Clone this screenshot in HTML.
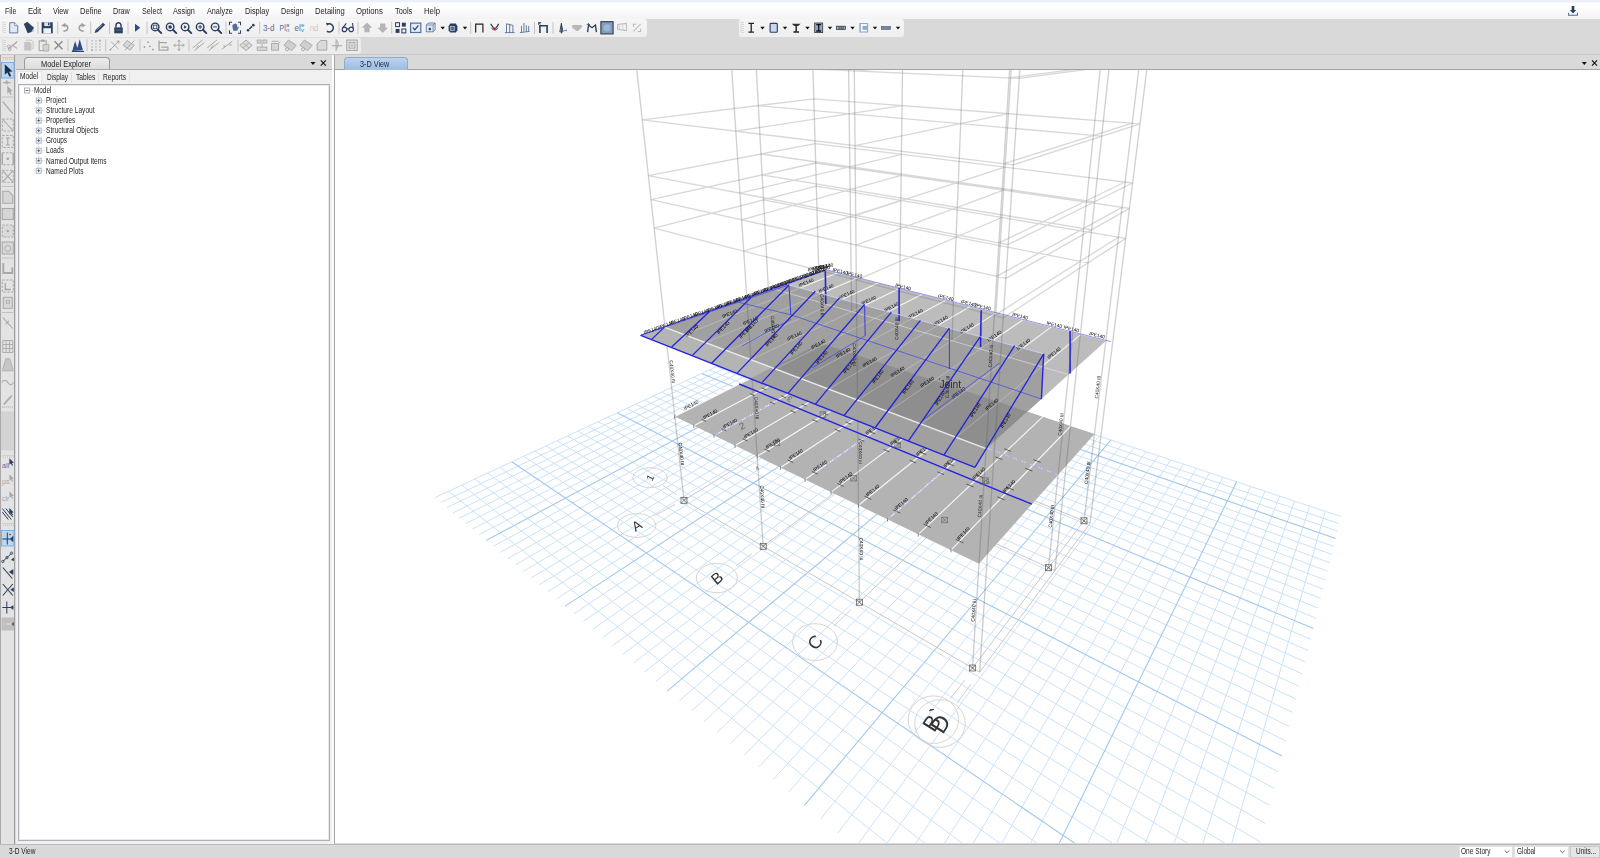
<!DOCTYPE html>
<html><head><meta charset="utf-8"><title>ETABS - 3-D View</title>
<style>
html,body{margin:0;padding:0;}
body{width:1600px;height:858px;overflow:hidden;background:#d9d9d9;font-family:"Liberation Sans",sans-serif;font-size:8px;color:#222;position:relative;}
.abs{position:absolute;}
.t{position:absolute;white-space:nowrap;transform-origin:0 50%;display:inline-block;}
#menubar{left:0;top:0;width:1600px;height:19px;background:linear-gradient(#edf0fa 0,#edf0fa 2px,#ffffff 3px,#fdfdfd 9px,#f3f3f3 19px);}
#tb1{left:0;top:19px;width:647px;height:18px;background:linear-gradient(#f6f6f6,#efefef);border-radius:0 3px 3px 0;}
#tb1b{left:739px;top:19px;width:165px;height:18px;background:linear-gradient(#f6f6f6,#efefef);border-radius:2px 3px 3px 2px;}
#tb2{left:0;top:37px;width:361px;height:17px;background:#ececec;border-radius:0 3px 3px 0;border-top:1px solid #e0e0e0;box-sizing:border-box;}
#dockline{left:0;top:54px;width:1600px;height:1px;background:#c6c6c6;}
#lefttb{left:0;top:55px;width:15px;height:789px;background:#e3e3e3;border-right:1px solid #9c9c9c;border-left:1px solid #a8a8a8;box-sizing:border-box;}
#band{left:16px;top:55px;width:1584px;height:15px;background:#d9d9d9;}
#bandline{left:16px;top:69px;width:316px;height:1px;background:#a9a9a9;}
#bandline2{left:335px;top:69px;width:1265px;height:1px;background:#a3a3a3;}
#metab{left:24px;top:57px;width:86px;height:13px;background:linear-gradient(#ececec,#dbdbdb);border:1px solid #9b9b9b;border-bottom:none;border-radius:4px 4px 0 0;box-sizing:border-box;}
#vtab{left:343.5px;top:57px;width:64px;height:13px;background:linear-gradient(#bdd4ee,#a9c6e6 55%,#9dbde2);border:1px solid #92abc9;border-bottom:none;border-radius:4px 4px 0 0;box-sizing:border-box;}
#panel{left:16px;top:70px;width:316px;height:774px;background:#f0f0f0;}
#subtab{left:17px;top:71px;width:25px;height:13px;background:#f7f7f7;border:1px solid #e4e4e4;border-bottom:none;box-sizing:border-box;}
.st{top:72px;height:11px;border-right:1px solid #e2e2e2;}
#tree{left:18px;top:84px;width:312px;height:757px;background:#fff;border:1px solid #aeaeb6;box-sizing:border-box;box-shadow:inset 0 0 0 1px #e9e9ee;}
#split{left:332px;top:55px;width:2px;height:789px;background:#fbfbfb;}
#splitline{left:334px;top:55px;width:1px;height:789px;background:#a5a5a5;}
#view{left:335px;top:70px;width:1265px;height:773px;background:#fff;overflow:hidden;}
#viewr{left:1597px;top:70px;width:3px;height:774px;background:#ececec;}
#status{left:0;top:844px;width:1600px;height:14px;background:#d9d9d9;border-top:1px solid #b9b9b9;box-sizing:border-box;}
.dd{top:845.5px;height:12.5px;background:#fff;border:1px solid #e1e1e1;box-sizing:border-box;}
#ov{left:0;top:0;pointer-events:none;}
</style></head><body>
<div id="menubar" class="abs"></div><div id="tb1" class="abs"></div><div id="tb1b" class="abs"></div><div id="tb2" class="abs"></div><div id="dockline" class="abs"></div>
<div id="band" class="abs"></div><div id="lefttb" class="abs"></div><div id="panel" class="abs"></div>
<div id="metab" class="abs"></div><div id="bandline" class="abs"></div><div id="bandline2" class="abs"></div><div id="vtab" class="abs"></div>
<div id="subtab" class="abs"></div><div class="abs st" style="left:42px;width:29px"></div><div class="abs st" style="left:72px;width:26px"></div><div class="abs st" style="left:99px;width:30px"></div>
<div id="tree" class="abs"></div><div id="split" class="abs"></div><div id="splitline" class="abs"></div>
<div id="view" class="abs"><svg width="1265" height="773" viewBox="335 70 1265 773" style="display:block;filter:blur(0.3px)" font-family="Liberation Sans, sans-serif">
<path d="M434.9 497.6L789.2 332.8M440.8 502.6L795.5 334.9M446.9 507.6L801.9 337M453.1 512.8L808.4 339.2M459.4 518.1L815 341.4M465.9 523.5L821.6 343.6M472.5 529L828.4 345.8M479.3 534.6L835.3 348.1M493.3 546.3L849.3 352.8M500.5 552.3L856.5 355.2M508 558.5L863.8 357.6M515.5 564.8L871.1 360.1M523.3 571.3L878.6 362.6M531.3 577.9L886.3 365.1M539.4 584.7L894 367.7M547.8 591.6L901.8 370.3M556.4 598.8L909.8 372.9M574.2 613.6L926.1 378.4M583.4 621.3L934.4 381.2M592.9 629.2L942.9 384M602.7 637.4L951.5 386.8M612.7 645.7L960.3 389.8M623 654.3L969.2 392.7M633.6 663.1L978.2 395.7M644.5 672.2L987.4 398.8M655.7 681.5L996.7 401.9M679.1 701L1015.9 408.3M691.3 711.2L1025.7 411.6M703.9 721.7L1035.7 414.9M717 732.5L1045.9 418.3M730.4 743.7L1056.2 421.7M744.2 755.3L1066.8 425.2M758.5 767.2L1077.5 428.8M773.3 779.5L1088.4 432.4M788.6 792.2L1099.5 436.1M820.7 819L1122.4 443.8M837.7 833.1L1134.1 447.7M855.2 847.7L1146.1 451.7M873.4 862.9L1158.3 455.7M892.3 878.6L1170.7 459.9M911.9 894.9L1183.4 464.1M932.3 911.9L1196.3 468.4M953.4 929.5L1209.5 472.8M975.5 947.9L1223 477.3M1022.4 986.9L1250.7 486.5M1047.3 1007.7L1265 491.2M1073.4 1029.5L1279.6 496.1M1100.7 1052.2L1294.5 501.1M1129.2 1075.9L1309.7 506.1M1159.1 1100.8L1325.2 511.3M448.6 491.3L1198.7 1093.1M461.9 485.1L1206.6 1061.3M474.8 479L1214 1031.4M487.5 473.1L1220.9 1003.1M499.8 467.4L1227.5 976.4M523.5 456.4L1239.7 927M534.9 451.1L1245.4 904.2M546.1 445.9L1250.7 882.5M557 440.8L1255.8 861.9M567.6 435.9L1260.7 842.2M578 431L1265.3 823.4M588.2 426.3L1269.8 805.4M598.1 421.7L1274 788.3M607.8 417.2L1278.1 771.8M626.5 408.4L1285.7 741M635.6 404.2L1289.3 726.5M644.5 400.1L1292.7 712.5M653.2 396L1296 699.1M661.7 392.1L1299.2 686.3M670 388.2L1302.3 673.9M678.2 384.4L1305.2 661.9M686.2 380.7L1308.1 650.4M694 377.1L1310.8 639.3M709.2 370L1316 618.2M716.6 366.5L1318.5 608.1M723.8 363.2L1320.9 598.5M730.9 359.9L1323.2 589.1M737.9 356.6L1325.4 580M744.7 353.5L1327.6 571.2M751.4 350.3L1329.7 562.7M758 347.3L1331.8 554.4M764.5 344.3L1333.7 546.4M777 338.4L1337.5 531.1M783.2 335.6L1339.3 523.7M789.2 332.8L1341.1 516.6" stroke="#cae2f9" stroke-width="1" fill="none"/>
<path d="M486.2 540.4L842.2 350.5M565.1 606.1L917.9 375.6M667.2 691.1L1006.2 405.1M804.4 805.4L1110.9 439.9M998.5 967L1236.7 481.8M511.8 461.8L1233.8 951M617.3 412.8L1282 756.1M701.7 373.5L1313.4 628.5M770.8 341.3L1335.7 538.6" stroke="#a0c8f1" stroke-width="1.1" fill="none"/>
<path d="M684 500.3L822.9 414.5M763.2 546.3L897.7 445M859.4 602.2L985.4 480.7M972.5 668L1084 520.8M979.6 672.2L1090 523.3M684 500.3L979.6 672.2M776.8 443L1054.9 570.6M822.9 414.5L1090 523.3" stroke="#cbc9c7" stroke-width="1" fill="none"/>
<ellipse cx="650" cy="477.7" rx="17.3" ry="10" fill="none" stroke="#d2d0ce" stroke-width="0.9"/><text transform="translate(650 477.7) rotate(-62)" font-size="10" fill="#333" text-anchor="middle" y="3.6">1</text>
<ellipse cx="636.7" cy="525.5" rx="19.3" ry="12" fill="none" stroke="#d2d0ce" stroke-width="0.9"/><text transform="translate(636.7 525.5) rotate(-32)" font-size="13.5" fill="#333" text-anchor="middle" y="4.9">A</text>
<ellipse cx="716.8" cy="578" rx="20.5" ry="14.7" fill="none" stroke="#d2d0ce" stroke-width="0.9"/><text transform="translate(716.8 578) rotate(-40)" font-size="15.5" fill="#333" text-anchor="middle" y="5.6">B</text>
<ellipse cx="815" cy="642.1" rx="22.4" ry="18.4" fill="none" stroke="#d2d0ce" stroke-width="0.9"/><text transform="translate(815 642.1) rotate(-52)" font-size="18" fill="#333" text-anchor="middle" y="6.5">C</text>
<ellipse cx="933.4" cy="719.7" rx="25.2" ry="23.8" fill="none" stroke="#d2d0ce" stroke-width="0.9"/><text transform="translate(933.4 719.7) rotate(-58)" font-size="22" fill="#333" text-anchor="middle" y="7.9">B`</text>
<ellipse cx="940" cy="723.5" rx="25.2" ry="23.8" fill="none" stroke="#d2d0ce" stroke-width="0.9"/><text transform="translate(940 723.5) rotate(-58)" font-size="23" fill="#333" text-anchor="middle" y="8.3">D</text>
<path d="M663 485.5L677 495M654 516L675 504.5M736 566L752 553.5M834 626L851 609.5M950 699L965 680M957 703L971 684" stroke="#d2d0ce" stroke-width="1" fill="none"/>
<path d="M684 500.3L674.8 416.4M763.2 546.3L757.2 456.3M859.4 602.2L858.5 505.3M972.5 668L979 563.7M979.6 672.2L986.6 567.4M776.8 443L772.6 367.1M853.6 478.2L852.6 397.3M944.6 520L948.1 433.3M1048.5 567.7L1058.1 474.8M1054.9 570.6L1064.9 477.4M822.9 414.5L820.8 342.9M897.7 445L898.7 368.8M985.4 480.7L990.5 399.3M1084 520.8L1094.5 433.9M1090 523.3L1100.9 436" stroke="rgba(90,90,90,0.3)" stroke-width="1.35" fill="none"/>
<g stroke="#555" stroke-width="0.7" fill="none"><rect x="681" y="497.3" width="6" height="6"/><path d="M681 497.3L687 503.3M687 497.3L681 503.3"/></g>
<g stroke="#555" stroke-width="0.7" fill="none"><rect x="760.2" y="543.3" width="6" height="6"/><path d="M760.2 543.3L766.2 549.3M766.2 543.3L760.2 549.3"/></g>
<g stroke="#555" stroke-width="0.7" fill="none"><rect x="856.4" y="599.2" width="6" height="6"/><path d="M856.4 599.2L862.4 605.2M862.4 599.2L856.4 605.2"/></g>
<g stroke="#555" stroke-width="0.7" fill="none"><rect x="969.5" y="665" width="6" height="6"/><path d="M969.5 665L975.5 671M975.5 665L969.5 671"/></g>
<g stroke="#555" stroke-width="0.7" fill="none"><rect x="773.8" y="440" width="6" height="6"/><path d="M773.8 440L779.8 446M779.8 440L773.8 446"/></g>
<g stroke="#555" stroke-width="0.7" fill="none"><rect x="850.6" y="475.2" width="6" height="6"/><path d="M850.6 475.2L856.6 481.2M856.6 475.2L850.6 481.2"/></g>
<g stroke="#555" stroke-width="0.7" fill="none"><rect x="941.6" y="517" width="6" height="6"/><path d="M941.6 517L947.6 523M947.6 517L941.6 523"/></g>
<g stroke="#555" stroke-width="0.7" fill="none"><rect x="1045.5" y="564.7" width="6" height="6"/><path d="M1045.5 564.7L1051.5 570.7M1051.5 564.7L1045.5 570.7"/></g>
<g stroke="#555" stroke-width="0.7" fill="none"><rect x="819.9" y="411.5" width="6" height="6"/><path d="M819.9 411.5L825.9 417.5M825.9 411.5L819.9 417.5"/></g>
<g stroke="#555" stroke-width="0.7" fill="none"><rect x="894.7" y="442" width="6" height="6"/><path d="M894.7 442L900.7 448M900.7 442L894.7 448"/></g>
<g stroke="#555" stroke-width="0.7" fill="none"><rect x="982.4" y="477.7" width="6" height="6"/><path d="M982.4 477.7L988.4 483.7M988.4 477.7L982.4 483.7"/></g>
<g stroke="#555" stroke-width="0.7" fill="none"><rect x="1081" y="517.8" width="6" height="6"/><path d="M1081 517.8L1087 523.8M1087 517.8L1081 523.8"/></g>
<polygon points="674.8,416.4 979,563.7 1094.5,433.9 820.8,342.9" fill="#b3b3b3"/>
<path d="M674.8 416.4L820.8 342.9M693.9 425.7L839.2 349M714 435.4L858.2 355.3M735.1 445.6L878.1 361.9M757.2 456.3L898.7 368.8M780.6 467.6L920.2 375.9M805.1 479.5L942.6 383.4M831.1 492.1L966 391.1M858.5 505.3L990.5 399.3M887.5 519.4L1016 407.8M918.3 534.3L1042.8 416.7M951 550.1L1070.8 426" stroke="#f6f6f6" stroke-width="1.15" fill="none"/>
<path d="M772.6 367.1L1058.1 474.8" stroke="#e3e3e3" stroke-width="0.8" fill="none"/>
<path d="M674.8 415.2L674.8 418.6M693.9 424.5L693.9 427.9M714 434.2L714 437.6M735.1 444.4L735.1 447.8M757.2 455.1L757.2 458.5M780.6 466.4L780.6 469.8M805.1 478.3L805.1 481.7M831.1 490.9L831.1 494.3M858.5 504.1L858.5 507.5M887.5 518.2L887.5 521.6M918.3 533.1L918.3 536.5M951 548.9L951 552.3" stroke="#555" stroke-width="0.7" fill="none"/>
<path d="M701.6 419.3L706.2 421.5M750.2 393.8L754.8 395.7M761.5 387.9L766.1 389.7M784 376.1L788.5 377.8M794.2 370.7L798.8 372.3M721.5 428.7L726.4 431M769.9 402L774.7 404M781.2 395.8L785.9 397.8M803.4 383.5L808.2 385.3M813.6 377.9L818.4 379.6M742.4 438.6L747.5 441M790.5 410.6L795.6 412.7M801.7 404.1L806.7 406.2M823.8 391.3L828.7 393.2M833.9 385.4L838.8 387.2M764.4 449L769.8 451.5M812.1 419.6L817.4 421.8M823.2 412.8L828.4 415M845 399.4L850.2 401.4M855 393.3L860.1 395.2M787.5 459.9L793.1 462.5M834.8 429.1L840.3 431.4M845.7 422L851.2 424.2M867.2 407.9L872.6 410M877.1 401.5L882.4 403.5M811.8 471.4L817.8 474.2M858.5 439L864.3 441.4M869.3 431.5L875 433.8M890.5 416.8L896.1 418.9M900.1 410.1L905.8 412.2M837.5 483.5L843.7 486.4M883.4 449.4L889.5 451.9M894 441.5L900 444M914.8 426.1L920.8 428.4M924.3 419.1L930.2 421.3M864.5 496.2L871.2 499.4M909.7 460.3L916.1 463M920 452.1L926.4 454.6M940.4 435.8L946.6 438.2M949.6 428.5L955.8 430.8M893.2 509.8L900.2 513.1M937.3 471.8L944 474.6M947.4 463.1L954.1 465.9M967.2 446.1L973.7 448.6M976.2 438.4L982.7 440.8M923.5 524.1L930.9 527.6M966.4 484L973.5 486.9M976.2 474.8L983.2 477.7M995.4 456.9L1002.3 459.5M1004.1 448.8L1010.9 451.3M955.7 539.3L963.6 543M997.2 496.8L1004.7 499.9M1006.6 487.1L1014 490.2M1025.1 468.2L1032.3 471M1033.4 459.7L1040.6 462.3" stroke="#333" stroke-width="0.7" fill="none"/>
<path d="M714 435.4L778 399.9M887.5 519.4L945.7 468.8M975 443.4L1058.1 474.8M866.8 436.4L826.2 464.8" stroke="#9a9af0" stroke-width="0.9" fill="none" stroke-dasharray="5 1.5 1 1.5"/>
<line x1="739.2" y1="384" x2="1031.9" y2="504.2" stroke="#2424dc" stroke-width="1.4"/>
<g opacity="0.75"><g stroke="#555" stroke-width="0.7" fill="none"><rect x="774" y="440.2" width="5.6" height="5.6"/><path d="M774 440.2L779.6 445.8M779.6 440.2L774 445.8"/></g></g>
<g opacity="0.75"><g stroke="#555" stroke-width="0.7" fill="none"><rect x="850.8" y="475.4" width="5.6" height="5.6"/><path d="M850.8 475.4L856.4 481M856.4 475.4L850.8 481"/></g></g>
<g opacity="0.75"><g stroke="#555" stroke-width="0.7" fill="none"><rect x="941.8" y="517.2" width="5.6" height="5.6"/><path d="M941.8 517.2L947.4 522.8M947.4 517.2L941.8 522.8"/></g></g>
<g opacity="0.75"><g stroke="#555" stroke-width="0.7" fill="none"><rect x="820.1" y="411.7" width="5.6" height="5.6"/><path d="M820.1 411.7L825.7 417.3M825.7 411.7L820.1 417.3"/></g></g>
<g opacity="0.75"><g stroke="#555" stroke-width="0.7" fill="none"><rect x="894.9" y="442.2" width="5.6" height="5.6"/><path d="M894.9 442.2L900.5 447.8M900.5 442.2L894.9 447.8"/></g></g>
<g opacity="0.75"><g stroke="#555" stroke-width="0.7" fill="none"><rect x="982.6" y="477.9" width="5.6" height="5.6"/><path d="M982.6 477.9L988.2 483.5M988.2 477.9L982.6 483.5"/></g></g>
<text transform="translate(692.3 407.6) rotate(-26.7)" font-size="4.8" fill="#000" text-anchor="middle" y="-1.0">IPE140</text>
<text transform="translate(711.4 416.5) rotate(-27.9)" font-size="4.8" fill="#000" text-anchor="middle" y="-1.0">IPE140</text>
<text transform="translate(731.3 425.8) rotate(-29.1)" font-size="4.8" fill="#000" text-anchor="middle" y="-1.0">IPE140</text>
<text transform="translate(752.2 435.6) rotate(-30.3)" font-size="4.8" fill="#000" text-anchor="middle" y="-1.0">IPE140</text>
<text transform="translate(774.2 445.8) rotate(-31.8)" font-size="4.8" fill="#000" text-anchor="middle" y="-1.0">IPE140</text>
<text transform="translate(797.3 456.6) rotate(-33.3)" font-size="4.8" fill="#000" text-anchor="middle" y="-1.0">IPE140</text>
<text transform="translate(821.6 468) rotate(-35)" font-size="4.8" fill="#000" text-anchor="middle" y="-1.0">IPE140</text>
<text transform="translate(873.9 431.4) rotate(-35)" font-size="4.8" fill="#000" text-anchor="middle" y="-1.0">IPE140</text>
<text transform="translate(847.3 480) rotate(-36.8)" font-size="4.8" fill="#000" text-anchor="middle" y="-1.0">IPE140</text>
<text transform="translate(898.5 441.6) rotate(-36.8)" font-size="4.8" fill="#000" text-anchor="middle" y="-1.0">IPE140</text>
<text transform="translate(874.3 492.6) rotate(-38.8)" font-size="4.8" fill="#000" text-anchor="middle" y="-1.0">IPE140</text>
<text transform="translate(924.5 452.3) rotate(-38.8)" font-size="4.8" fill="#000" text-anchor="middle" y="-1.0">IPE140</text>
<text transform="translate(902.9 506) rotate(-41)" font-size="4.8" fill="#000" text-anchor="middle" y="-1.0">IPE140</text>
<text transform="translate(951.8 463.6) rotate(-41)" font-size="4.8" fill="#000" text-anchor="middle" y="-1.0">IPE140</text>
<text transform="translate(933.2 520.2) rotate(-43.4)" font-size="4.8" fill="#000" text-anchor="middle" y="-1.0">IPE140</text>
<text transform="translate(980.5 475.5) rotate(-43.4)" font-size="4.8" fill="#000" text-anchor="middle" y="-1.0">IPE140</text>
<text transform="translate(965.3 535.2) rotate(-46)" font-size="4.8" fill="#000" text-anchor="middle" y="-1.0">IPE140</text>
<text transform="translate(1010.9 488.1) rotate(-46)" font-size="4.8" fill="#000" text-anchor="middle" y="-1.0">IPE140</text>
<path d="M674.8 416.4L665 327.3M757.2 456.3L750.9 359.8M858.5 505.3L857.5 400.1M979 563.7L986.1 448.7M986.6 567.4L994.3 451.8M772.6 367.1L768.3 287.4M852.6 397.3L851.6 311.6M948.1 433.3L951.9 340.7M1058.1 474.8L1068.5 374.6M1064.9 477.4L1075.8 376.7M820.8 342.9L818.7 268M898.7 368.8L899.7 288.6M990.5 399.3L995.9 313.1M1094.5 433.9L1105.8 341.1M1100.9 436L1112.6 342.8" stroke="rgba(90,90,90,0.28)" stroke-width="1.35" fill="none"/>
<polygon points="665,327.3 986.1,448.7 1105.8,341.1 825.5,269.6" fill="#bcbcbc"/>
<clipPath id="cD"><polygon points="640.7,335.3 974.9,467.3 986.1,448.7 1041.4,399 1043.7,353.8 789,284.9 797,276.3"/></clipPath>
<g clip-path="url(#cD)"><rect x="600" y="250" width="500" height="250" fill="#b4b4b4"/><polygon points="674.8,416.4 979,563.7 1094.5,433.9 820.8,342.9" fill="rgba(0,0,0,0.11)"/><polygon points="665,327.3 986.1,448.7 1105.8,341.1 825.5,269.6" fill="rgba(0,0,0,0.11)"/></g>
<clipPath id="cOut"><path clip-rule="evenodd" d="M335 70h1262v773h-1262zM640.7 335.3 L974.9 467.3 L986.1 448.7 L1041.4 399 L1043.7 353.8 L789 284.9 L797 276.3 z"/></clipPath>
<path d="M665 327.3L818.7 268M684.9 334.8L837.7 272.8M705.7 342.7L857.5 277.9M727.7 351L878.2 283.1M750.9 359.8L899.7 288.6M775.3 369L922.2 294.3M801.1 378.8L945.7 300.3M828.5 389.1L970.2 306.5M857.5 400.1L995.9 313.1M888.3 411.7L1022.8 319.9M921.1 424.1L1051 327.1M956 437.4L1080.7 334.7" stroke="#dcdcdc" stroke-width="0.9" fill="none" opacity="0.45"/>
<g clip-path="url(#cOut)"><path d="M665 327.3L818.7 268M684.9 334.8L837.7 272.8M705.7 342.7L857.5 277.9M727.7 351L878.2 283.1M750.9 359.8L899.7 288.6M775.3 369L922.2 294.3M801.1 378.8L945.7 300.3M828.5 389.1L970.2 306.5M857.5 400.1L995.9 313.1M888.3 411.7L1022.8 319.9M921.1 424.1L1051 327.1M956 437.4L1080.7 334.7" stroke="#f3f3f3" stroke-width="1.1" fill="none"/></g>
<path d="M768.3 287.4L1068.5 374.6" stroke="#e9e9e9" stroke-width="0.8" fill="none" opacity="0.7"/>
<line x1="665" y1="327.3" x2="986.1" y2="448.7" stroke="#eaeaea" stroke-width="1.4"/>
<text transform="translate(807.1 285.2) rotate(-22.1)" font-size="4.8" fill="#000" text-anchor="middle" y="-1.0">IPE140</text>
<text transform="translate(730.7 316.2) rotate(-22.1)" font-size="4.8" fill="#000" text-anchor="middle" y="-1.0">IPE140</text>
<text transform="translate(827.2 290.8) rotate(-23.1)" font-size="4.8" fill="#000" text-anchor="middle" y="-1.0">IPE140</text>
<text transform="translate(751.3 323.3) rotate(-23.1)" font-size="4.8" fill="#000" text-anchor="middle" y="-1.0">IPE140</text>
<text transform="translate(848.1 296.7) rotate(-24.3)" font-size="4.8" fill="#000" text-anchor="middle" y="-1.0">IPE140</text>
<text transform="translate(772.9 330.7) rotate(-24.3)" font-size="4.8" fill="#000" text-anchor="middle" y="-1.0">IPE140</text>
<text transform="translate(869.9 302.8) rotate(-25.6)" font-size="4.8" fill="#000" text-anchor="middle" y="-1.0">IPE140</text>
<text transform="translate(795.5 338.4) rotate(-25.6)" font-size="4.8" fill="#000" text-anchor="middle" y="-1.0">IPE140</text>
<text transform="translate(892.8 309.3) rotate(-27)" font-size="4.8" fill="#000" text-anchor="middle" y="-1.0">IPE140</text>
<text transform="translate(819.4 346.6) rotate(-27)" font-size="4.8" fill="#000" text-anchor="middle" y="-1.0">IPE140</text>
<text transform="translate(916.8 316) rotate(-28.5)" font-size="4.8" fill="#000" text-anchor="middle" y="-1.0">IPE140</text>
<text transform="translate(844.5 355.2) rotate(-28.5)" font-size="4.8" fill="#000" text-anchor="middle" y="-1.0">IPE140</text>
<text transform="translate(941.9 323.1) rotate(-30.2)" font-size="4.8" fill="#000" text-anchor="middle" y="-1.0">IPE140</text>
<text transform="translate(871 364.4) rotate(-30.2)" font-size="4.8" fill="#000" text-anchor="middle" y="-1.0">IPE140</text>
<text transform="translate(968.2 330.5) rotate(-32.2)" font-size="4.8" fill="#000" text-anchor="middle" y="-1.0">IPE140</text>
<text transform="translate(899 374) rotate(-32.2)" font-size="4.8" fill="#000" text-anchor="middle" y="-1.0">IPE140</text>
<text transform="translate(995.9 338.3) rotate(-34.3)" font-size="4.8" fill="#000" text-anchor="middle" y="-1.0">IPE140</text>
<text transform="translate(928.6 384.2) rotate(-34.3)" font-size="4.8" fill="#000" text-anchor="middle" y="-1.0">IPE140</text>
<text transform="translate(1025 346.5) rotate(-36.7)" font-size="4.8" fill="#000" text-anchor="middle" y="-1.0">IPE140</text>
<text transform="translate(960.1 395) rotate(-36.7)" font-size="4.8" fill="#000" text-anchor="middle" y="-1.0">IPE140</text>
<text transform="translate(1055.7 355.2) rotate(-39.5)" font-size="4.8" fill="#000" text-anchor="middle" y="-1.0">IPE140</text>
<text transform="translate(993.4 406.5) rotate(-39.5)" font-size="4.8" fill="#000" text-anchor="middle" y="-1.0">IPE140</text>
<text transform="translate(678.9 454.1) rotate(83.7)" font-size="4.8" fill="#000" text-anchor="middle" y="-0.8">C40X40 III</text>
<text transform="translate(669.9 371.9) rotate(83.7)" font-size="4.8" fill="#000" text-anchor="middle" y="-0.8" opacity="0.85">C40X40 III</text>
<text transform="translate(759.9 496.8) rotate(86.2)" font-size="4.8" fill="#000" text-anchor="middle" y="-0.8">C40X40 III</text>
<text transform="translate(754.1 408.1) rotate(86.2)" font-size="4.8" fill="#000" text-anchor="middle" y="-0.8" opacity="0.85">C40X40 III</text>
<text transform="translate(858.9 548.9) rotate(89.5)" font-size="4.8" fill="#000" text-anchor="middle" y="-0.8">C40X40 III</text>
<text transform="translate(858 452.7) rotate(89.5)" font-size="4.8" fill="#000" text-anchor="middle" y="-0.8" opacity="0.85">C40X40 III</text>
<text transform="translate(976.1 610.6) rotate(-86.5)" font-size="4.8" fill="#000" text-anchor="middle" y="-0.8">C40X40 III</text>
<text transform="translate(982.6 506.2) rotate(-86.5)" font-size="4.8" fill="#000" text-anchor="middle" y="-0.8" opacity="0.85">C40X40 III</text>
<text transform="translate(770.5 327.3) rotate(86.9)" font-size="4.8" fill="#000" text-anchor="middle" y="-0.8" opacity="0.85">C40X40 III</text>
<text transform="translate(852.1 354.5) rotate(89.3)" font-size="4.8" fill="#000" text-anchor="middle" y="-0.8" opacity="0.85">C40X40 III</text>
<text transform="translate(950 387) rotate(-87.7)" font-size="4.8" fill="#000" text-anchor="middle" y="-0.8" opacity="0.85">C40X40 III</text>
<text transform="translate(1053.8 516.6) rotate(-84.1)" font-size="4.8" fill="#000" text-anchor="middle" y="-0.8">C40X40 III</text>
<text transform="translate(1063.3 424.7) rotate(-84.1)" font-size="4.8" fill="#000" text-anchor="middle" y="-0.8" opacity="0.85">C40X40 III</text>
<text transform="translate(819.7 305.4) rotate(88.4)" font-size="4.8" fill="#000" text-anchor="middle" y="-0.8" opacity="0.85">C40X40 III</text>
<text transform="translate(899.2 328.7) rotate(-89.3)" font-size="4.8" fill="#000" text-anchor="middle" y="-0.8" opacity="0.85">C40X40 III</text>
<text transform="translate(993.2 356.2) rotate(-86.4)" font-size="4.8" fill="#000" text-anchor="middle" y="-0.8" opacity="0.85">C40X40 III</text>
<text transform="translate(1089.8 473) rotate(-83.1)" font-size="4.8" fill="#000" text-anchor="middle" y="-0.8">C40X40 III</text>
<text transform="translate(1100.2 387.5) rotate(-83.1)" font-size="4.8" fill="#000" text-anchor="middle" y="-0.8" opacity="0.85">C40X40 III</text>
<path d="M733.2 301L790.8 314.8M790.8 314.8L1041.4 399M640.7 335.3L789 284.9M640.7 335.3L825.5 269.6M640.7 335.3L812 274.5M700 315L824 271M790.8 319.3L742 346M921.8 420.8L999.3 363.2M865.2 335.7L812 368" stroke="#4a4ae6" stroke-width="0.9" fill="none" opacity="0.85"/>
<line x1="825.5" y1="269.6" x2="1110.7" y2="341.6" stroke="#8a8af2" stroke-width="0.9"/>
<path d="M789 284.9L790.8 314.8M864.6 304.5L865.2 335.7M949.4 328.1L949.4 369.2" stroke="#3a3ae0" stroke-width="1.0" fill="none"/>
<line x1="1043.7" y1="353.8" x2="1041.4" y2="399" stroke="#2424dc" stroke-width="1.4"/>
<path d="M825.3 270.4L825.8 304M899.1 287.7L899.1 321.2M981.2 310.3L980.5 347M1070.1 331.2L1070.1 373.5" stroke="#2424dc" stroke-width="1.6" fill="none"/>
<line x1="789" y1="284.9" x2="1043.7" y2="353.8" stroke="#c9cdf5" stroke-width="1.0"/>
<path d="M651.9 339.1L664.2 327.4M671.6 347L709.1 312M692.4 355.4L751.3 297.2M711.6 363.3L788.8 285.2M737.4 372.9L815.3 291.3M762.2 382.4L839.8 297.6M788.1 393.1L864.6 304.5M815.4 404.2L891.4 312.1M844.2 415.3L920.4 320.3M875.3 427.5L949.4 328.1M908.5 440.8L980.3 336.6M943.9 455.2L1014.7 345.7M974.9 467.3L1043.7 353.8" stroke="#2424dc" stroke-width="1.3" fill="none"/>
<line x1="640.7" y1="335.3" x2="974.9" y2="467.3" stroke="#2424dc" stroke-width="1.4"/>
<text transform="translate(744 330.5) rotate(-45.3)" font-size="4.8" fill="#000" text-anchor="middle" y="3.6">IPE140</text>
<text transform="translate(770.1 338.6) rotate(-46.3)" font-size="4.8" fill="#000" text-anchor="middle" y="3.6">IPE140</text>
<text transform="translate(794.8 346.8) rotate(-47.5)" font-size="4.8" fill="#000" text-anchor="middle" y="3.6">IPE140</text>
<text transform="translate(820.2 355.9) rotate(-49.2)" font-size="4.8" fill="#000" text-anchor="middle" y="3.6">IPE140</text>
<text transform="translate(847.3 365.5) rotate(-50.5)" font-size="4.8" fill="#000" text-anchor="middle" y="3.6">IPE140</text>
<text transform="translate(876.2 375.4) rotate(-51.3)" font-size="4.8" fill="#000" text-anchor="middle" y="3.6">IPE140</text>
<text transform="translate(906.4 385.8) rotate(-53.3)" font-size="4.8" fill="#000" text-anchor="middle" y="3.6">IPE140</text>
<text transform="translate(938.7 397) rotate(-55.4)" font-size="4.8" fill="#000" text-anchor="middle" y="3.6">IPE140</text>
<text transform="translate(973.6 409.2) rotate(-57.1)" font-size="4.8" fill="#000" text-anchor="middle" y="3.6">IPE140</text>
<text transform="translate(1003.8 419.6) rotate(-58.8)" font-size="4.8" fill="#000" text-anchor="middle" y="3.6">IPE140</text>
<text transform="translate(690.4 329.5) rotate(-43)" font-size="4.8" fill="#000" text-anchor="middle" y="3.6">IPE140</text>
<text transform="translate(721.8 326.3) rotate(-44.7)" font-size="4.8" fill="#000" text-anchor="middle" y="3.6">IPE140</text>
<text transform="translate(750.2 324.2) rotate(-45.3)" font-size="4.8" fill="#000" text-anchor="middle" y="3.6">IPE140</text>
<text transform="translate(651.8 331.4) rotate(-19.6)" font-size="4.8" fill="#000" text-anchor="middle" y="0.2">IPE140</text>
<text transform="translate(666.6 326.1) rotate(-19.6)" font-size="4.8" fill="#000" text-anchor="middle" y="0.2">IPE140</text>
<text transform="translate(677.7 322.2) rotate(-19.6)" font-size="4.8" fill="#000" text-anchor="middle" y="0.2">IPE140</text>
<text transform="translate(690.6 317.6) rotate(-19.6)" font-size="4.8" fill="#000" text-anchor="middle" y="0.2">IPE140</text>
<text transform="translate(701.7 313.6) rotate(-19.6)" font-size="4.8" fill="#000" text-anchor="middle" y="0.6">IPE140</text>
<text transform="translate(714.6 309) rotate(-19.6)" font-size="4.8" fill="#000" text-anchor="middle" y="0.6">IPE140</text>
<text transform="translate(723.9 305.7) rotate(-19.6)" font-size="4.8" fill="#000" text-anchor="middle" y="0.6">IPE140</text>
<text transform="translate(733.1 302.5) rotate(-19.6)" font-size="4.8" fill="#000" text-anchor="middle" y="0.6">IPE140</text>
<text transform="translate(742.3 299.2) rotate(-19.6)" font-size="4.8" fill="#000" text-anchor="middle" y="0.6">IPE140</text>
<text transform="translate(751.6 295.9) rotate(-19.6)" font-size="4.8" fill="#000" text-anchor="middle" y="0.6">IPE140</text>
<text transform="translate(760.8 292.6) rotate(-19.6)" font-size="4.8" fill="#000" text-anchor="middle" y="0.6">IPE140</text>
<text transform="translate(770.1 289.3) rotate(-19.6)" font-size="4.8" fill="#000" text-anchor="middle" y="0.6">IPE140</text>
<text transform="translate(777.5 286.7) rotate(-19.6)" font-size="4.8" fill="#000" text-anchor="middle" y="0.6">IPE140</text>
<text transform="translate(784.8 284.1) rotate(-19.6)" font-size="4.8" fill="#000" text-anchor="middle" y="0.6">IPE140</text>
<text transform="translate(792.2 281.4) rotate(-19.6)" font-size="4.8" fill="#000" text-anchor="middle" y="0.6">IPE140</text>
<text transform="translate(799.6 278.8) rotate(-19.6)" font-size="4.8" fill="#000" text-anchor="middle" y="0.6">IPE140</text>
<text transform="translate(807 276.2) rotate(-19.6)" font-size="4.8" fill="#000" text-anchor="middle" y="0.6">IPE140</text>
<text transform="translate(812.6 274.2) rotate(-19.6)" font-size="4.8" fill="#000" text-anchor="middle" y="0.6">IPE140</text>
<text transform="translate(818.1 272.2) rotate(-19.6)" font-size="4.8" fill="#000" text-anchor="middle" y="0.6">IPE140</text>
<text transform="translate(822.7 270.6) rotate(-19.6)" font-size="4.8" fill="#000" text-anchor="middle" y="0.6">IPE140</text>
<text transform="translate(820 269) rotate(-12)" font-size="4.8" fill="#000" text-anchor="middle">IPE140</text>
<text transform="translate(823 268.4) rotate(-12)" font-size="4.8" fill="#000" text-anchor="middle">IPE140</text>
<text transform="translate(816 269.8) rotate(-12)" font-size="4.8" fill="#000" text-anchor="middle">IPE140</text>
<text transform="translate(826 267.8) rotate(-12)" font-size="4.8" fill="#000" text-anchor="middle">IPE140</text>
<text transform="translate(839.6 274) rotate(14)" font-size="4.8" fill="#000" text-anchor="middle" y="-1.2">IPE140</text>
<text transform="translate(853.8 277.5) rotate(14)" font-size="4.8" fill="#000" text-anchor="middle" y="-1.2">IPE140</text>
<text transform="translate(902.4 289.6) rotate(14)" font-size="4.8" fill="#000" text-anchor="middle" y="-1.2">IPE140</text>
<text transform="translate(945.2 300.3) rotate(14)" font-size="4.8" fill="#000" text-anchor="middle" y="-1.2">IPE140</text>
<text transform="translate(968 306) rotate(14)" font-size="4.8" fill="#000" text-anchor="middle" y="-1.2">IPE140</text>
<text transform="translate(982.3 309.6) rotate(14)" font-size="4.8" fill="#000" text-anchor="middle" y="-1.2">IPE140</text>
<text transform="translate(1019.4 318.8) rotate(14)" font-size="4.8" fill="#000" text-anchor="middle" y="-1.2">IPE140</text>
<text transform="translate(1053.6 327.4) rotate(14)" font-size="4.8" fill="#000" text-anchor="middle" y="-1.2">IPE140</text>
<text transform="translate(1070.7 331.6) rotate(14)" font-size="4.8" fill="#000" text-anchor="middle" y="-1.2">IPE140</text>
<text transform="translate(1096.4 338) rotate(14)" font-size="4.8" fill="#000" text-anchor="middle" y="-1.2">IPE140</text>
<path d="M654.1 228.1L1003.3 317.8M763.5 199.8L1088.1 262.8M816.3 186.2L1125.7 238.4M654.1 228.1L816.3 186.2M743.7 251.1L900.8 200.5M856.3 280.1L1001.9 217.5M994.4 315.6L1118.4 237.2M1003.3 317.8L1125.7 238.4M651 199.7L1005.9 278.3M762.1 174.9L1091.6 229.8M815.7 163L1129.4 208.3M651 199.7L815.7 163M741.6 219.8L901.2 175.4M856 245.1L1003.6 190.2M996.8 276.3L1122.1 207.3M1005.9 278.3L1129.4 208.3M648.4 175.7L1008.1 244.6M761 154L1094.6 201.8M815.1 143.6L1132.6 183M648.4 175.7L815.1 143.6M739.9 193.2L901.4 154.3M855.7 215.4L1005 167.1M998.9 242.9L1125.1 182M1008.1 244.6L1132.6 183M642.3 119.9L1013.5 164.8M758.4 105.6L1101.7 136.2M813.8 98.8L1140 123.8M642.3 119.9L813.8 98.8M735.8 131.2L902 105.6M855 145.7L1008.4 113.7M1003.8 163.7L1132.3 123.2M1013.5 164.8L1140 123.8M635.8 61L1019.2 78.4M755.6 54.9L1109.2 66.3M812.5 52L1147.9 61.2M635.8 61L812.5 52M731.4 65.4L902.7 54.5M854.3 70.9L1011.9 57.5M1009.1 77.9L1139.9 60.9M1019.2 78.4L1147.9 61.2" stroke="rgba(100,100,100,0.25)" stroke-width="1.35" fill="none"/>
<path d="M665 327.3L635 53.5M750.9 359.8L730.9 56.9M857.5 400.1L854.2 61.3M986.1 448.7L1009.8 66.8M994.3 451.8L1020 67.1M768.3 287.4L755.2 48.5M851.6 311.6L848.4 50.8M951.9 340.7L963.5 53.7M1068.5 374.6L1101.5 57.1M1075.8 376.7L1110.2 57.3M818.7 268L812.3 46.1M899.7 288.6L902.8 48M995.9 313.1L1012.4 50.2M1105.8 341.1L1140.8 52.9M1112.6 342.8L1148.9 53.1" stroke="rgba(90,90,90,0.28)" stroke-width="1.35" fill="none"/>
<text x="939.5" y="388" font-size="10.2" fill="#2a2a2a">Joint</text>
<text x="938.5" y="382" font-size="5" fill="#333">*</text>
<text transform="translate(742 426) rotate(-25)" font-size="9.5" fill="#666" text-anchor="middle" y="3.3">2</text>
<text transform="translate(789.6 399) rotate(-150)" font-size="8" fill="#666" text-anchor="middle" y="2.8">3</text>
<text transform="translate(986 482) rotate(-10)" font-size="6.5" fill="#666" text-anchor="middle" y="2.3">15</text>
<text transform="translate(757 468) rotate(-20)" font-size="6" fill="#666" text-anchor="middle" y="2.1">4</text>
</svg></div><div id="status" class="abs"></div>
<div class="abs dd" style="left:1458.5px;width:54px"></div><div class="abs dd" style="left:1514px;width:54.5px"></div><div class="abs dd" style="left:1570px;width:30px;background:#e6e6e6;border-color:#c9c9c9"></div>
<svg id="ov" class="abs" width="1600" height="858" viewBox="0 0 1600 858" font-family="Liberation Sans, sans-serif">
<g transform="translate(13.5 27.8) scale(0.85)"><path d="M-4.5 -6h6l3.5 3.5v8.5h-9.5z" fill="#dfe8f5" stroke="#4f6e9c" stroke-width="1"/><path d="M1.5 -6v3.5h3.5" fill="#fff" stroke="#4f6e9c" stroke-width="0.8"/></g>
<g transform="translate(28.5 27.8) scale(0.85)"><path d="M-5.5 -4.5l4 -2.5l8 7l-3 5l-4.5 1.5z" fill="#2b3f5e"/><path d="M3.5 4.5l3-4.5l-0.5 5z" fill="#a9c1e0"/></g>
<g transform="translate(47.2 27.8) scale(0.85)"><rect x="-6.5" y="-6.5" width="13" height="13" fill="#2b3f5e"/><rect x="-3.5" y="-6.5" width="7" height="4.5" fill="#d7e1ef"/><rect x="1" y="-6" width="1.6" height="3" fill="#2b3f5e"/><rect x="-4.5" y="0.5" width="9" height="6" fill="#eef2f8"/></g>
<g transform="translate(66.0 27.8) scale(0.88)"><path d="M-3 3.5c6 1 7-6 1-7" fill="none" stroke="#9f9f9f" stroke-width="1.8"/><path d="M-5.5 -2.5l5.2 -3.2l-0.6 5z" fill="#9f9f9f"/></g>
<g transform="translate(81.0 27.8) scale(0.88)"><path d="M3 3.5c-6 1 -7-6 -1-7" fill="none" stroke="#9f9f9f" stroke-width="1.8"/><path d="M5.5 -2.5l-5.2 -3.2l0.6 5z" fill="#9f9f9f"/></g>
<g transform="translate(99.7 27.8) scale(0.85)"><path d="M-6 6l1.2-3.6l8.6-8.4l2.6 2.4l-8.8 8.6z" fill="#2b3f5e"/><path d="M-3.5 2.5l6.5-6.3" stroke="#c9d6ea" stroke-width="0.8"/></g>
<g transform="translate(118.5 27.8) scale(0.85)"><rect x="-5" y="-0.5" width="10" height="7" fill="#2b3f5e"/><path d="M-3 -0.5v-2.5a3 3 0 0 1 6 0v2.5" fill="none" stroke="#2b3f5e" stroke-width="1.7"/><rect x="-3" y="2" width="6" height="1.2" fill="#4f6e9c"/></g>
<g transform="translate(137.2 27.8) scale(0.88)"><path d="M-2.5 -4.5l6 4.5l-6 4.5z" fill="#2c4a86"/></g>
<g transform="translate(156.0 27.8) scale(0.88)"><circle cx="-1" cy="-1" r="4.3" fill="#e9eef6" stroke="#2b3f5e" stroke-width="1.6"/><path d="M2.2 2.2L6 6" stroke="#2b3f5e" stroke-width="2.2" stroke-linecap="round"/><rect x="-3" y="-3" width="4" height="4" fill="none" stroke="#2b3f5e" stroke-width="0.9"/></g>
<g transform="translate(171.0 27.8) scale(0.88)"><circle cx="-1" cy="-1" r="4.3" fill="#e9eef6" stroke="#2b3f5e" stroke-width="1.6"/><path d="M2.2 2.2L6 6" stroke="#2b3f5e" stroke-width="2.2" stroke-linecap="round"/><circle cx="-1" cy="-1" r="2" fill="#2b3f5e"/></g>
<g transform="translate(186.0 27.8) scale(0.88)"><circle cx="-1" cy="-1" r="4.3" fill="#e9eef6" stroke="#2b3f5e" stroke-width="1.6"/><path d="M2.2 2.2L6 6" stroke="#2b3f5e" stroke-width="2.2" stroke-linecap="round"/><path d="M-2.2 -3l3 2l-3 2z" fill="#2b3f5e"/></g>
<g transform="translate(201.0 27.8) scale(0.88)"><circle cx="-1" cy="-1" r="4.3" fill="#e9eef6" stroke="#2b3f5e" stroke-width="1.6"/><path d="M2.2 2.2L6 6" stroke="#2b3f5e" stroke-width="2.2" stroke-linecap="round"/><path d="M-3.2 -1h4.4M-1 -3.2v4.4" stroke="#2b3f5e" stroke-width="1.1"/></g>
<g transform="translate(216.0 27.8) scale(0.88)"><circle cx="-1" cy="-1" r="4.3" fill="#e9eef6" stroke="#2b3f5e" stroke-width="1.6"/><path d="M2.2 2.2L6 6" stroke="#2b3f5e" stroke-width="2.2" stroke-linecap="round"/><path d="M-3.2 -1h4.4" stroke="#2b3f5e" stroke-width="1.1"/></g>
<g transform="translate(235.0 27.8) scale(0.85)"><path d="M-6.5 -3v-3.5h3M6.5 -3v-3.5h-3M-6.5 3v3.5h3M6.5 3v3.5h-3" fill="none" stroke="#2b3f5e" stroke-width="1.2"/><path d="M-3 -1v-2.5h1.3v-1h1.4v-0.6h1.4v0.8h1.4v4l1-1.2l1 0.6l-2 4.4h-4.5z" fill="#4f6e9c"/></g>
<g transform="translate(250.7 27.8) scale(0.88)"><circle cx="-3" cy="2.8" r="1.5" fill="#2b3f5e"/><circle cx="3" cy="-3" r="1.5" fill="#2b3f5e"/><path d="M-1.6 1.4l3.2-3" stroke="#2b3f5e" stroke-width="1.8"/></g>
<text x="268.7" y="30.6" font-size="8.6" fill="#4f6e9c" text-anchor="middle" textLength="11.5" lengthAdjust="spacingAndGlyphs">3-d</text>
<text x="279.5" y="30.6" font-size="8.6" fill="#4f6e9c" textLength="6.2" lengthAdjust="spacingAndGlyphs">Pl</text><text x="286" y="27.2" font-size="6" fill="#4f6e9c">a</text><text x="286" y="32.4" font-size="6" fill="#4f6e9c">n</text>
<text x="294.5" y="30.6" font-size="8.6" fill="#4f6e9c" textLength="6.2" lengthAdjust="spacingAndGlyphs">el</text><text x="301" y="27.2" font-size="6" fill="#4f6e9c">e</text><text x="301" y="32.4" font-size="6" fill="#4f6e9c">v</text>
<text x="314" y="30.6" font-size="8.6" fill="#c9c9c9" text-anchor="middle" textLength="8.5" lengthAdjust="spacingAndGlyphs">nd</text>
<g transform="translate(330.0 27.8) scale(0.88)"><path d="M-2.5 -4.2a4.6 4.6 0 1 1 -1 8" fill="none" stroke="#2b3f5e" stroke-width="1.7"/><path d="M-4.6 -5.8l4 0.6l-2.8 3z" fill="#2b3f5e"/></g>
<g transform="translate(348.0 27.8) scale(0.88)"><circle cx="-4" cy="1.8" r="2.6" fill="none" stroke="#2b3f5e" stroke-width="1.3"/><circle cx="3.6" cy="1.8" r="2.6" fill="none" stroke="#2b3f5e" stroke-width="1.3"/><path d="M-1.4 1.2h2.4M-6 0l4-5M5.8 0.5l-0.6-6" stroke="#2b3f5e" stroke-width="1.2" fill="none"/></g>
<g transform="translate(367.0 27.8) scale(0.88)"><path d="M0 -6l6 6h-3v5h-6v-5h-3z" fill="#b5b5b5"/></g>
<g transform="translate(382.7 27.8) scale(0.88)"><path d="M0 6l6 -6h-3v-5h-6v5h-3z" fill="#b5b5b5"/></g>
<g transform="translate(400.7 27.8) scale(0.85)"><rect x="-6" y="-6" width="4.6" height="4.6" fill="none" stroke="#2b3f5e" stroke-width="1.2"/><rect x="1.4" y="-6" width="4.6" height="4.6" fill="#2b3f5e"/><rect x="-6" y="1.4" width="4.6" height="4.6" fill="#2b3f5e"/><rect x="1.4" y="1.4" width="4.6" height="4.6" fill="none" stroke="#2b3f5e" stroke-width="1.2"/></g>
<g transform="translate(415.7 27.8) scale(0.85)"><rect x="-6" y="-5.5" width="12" height="11" fill="#e4ebf5" stroke="#4f6e9c" stroke-width="1.4"/><path d="M-3.2 -0.2l2.2 2.6l4.2-5.2" fill="none" stroke="#2b3f5e" stroke-width="1.5"/></g>
<g transform="translate(430.7 27.8) scale(0.8)"><path d="M-5.5 -3.5l2.5-2.5h8.5v8.5l-2.5 2.5h-8.5z" fill="#e2e9f3" stroke="#4f6e9c" stroke-width="1"/><path d="M-5.5 -3.5h8.5v8.5M3 -3.5l2.5-2.5" fill="none" stroke="#4f6e9c" stroke-width="0.9"/><rect x="-2.4" y="0" width="2.6" height="3" fill="#2b3f5e"/></g>
<path d="M440.5 26.8l4.4 0l-2.2 2.6z" fill="#111"/>
<g transform="translate(453.0 27.8) scale(0.8)"><path d="M-5.5 -2l2-3.5h7l2 3.5v5l-2 3h-7l-2-3z" fill="#2b3f5e"/><rect x="-3" y="-1.5" width="5" height="5" fill="#4f6e9c" stroke="#dfe7f3" stroke-width="0.7"/></g>
<path d="M462.8 26.8l4.4 0l-2.2 2.6z" fill="#111"/>
<g transform="translate(479.3 27.8) scale(0.8)"><path d="M-4.5 6v-10.5h9v10.5" fill="none" stroke="#222" stroke-width="1.5"/></g>
<g transform="translate(494.7 27.8) scale(0.8)"><path d="M-5 -5l4 6M5 -5l-4 6" stroke="#2b3f5e" stroke-width="1.5"/><path d="M-4 0a4.2 4.2 0 0 0 8 0" fill="none" stroke="#2b3f5e" stroke-width="1"/><circle cx="0" cy="1.2" r="1.7" fill="#d81e1e"/></g>
<g transform="translate(509.7 27.8) scale(0.8)"><path d="M-6 6h12M-4 6v-11M0 6v-11M4 6v-9M-4 -5l8 2" fill="none" stroke="#4f6e9c" stroke-width="1.1"/></g>
<g transform="translate(524.7 27.8) scale(0.8)"><path d="M-6 6l12-1.5M-4 5.5v-8M-1 5v-11M2 4.8v-8M5 4.6v-7" fill="none" stroke="#4f6e9c" stroke-width="1.1"/></g>
<g transform="translate(543.5 27.8) scale(0.8)"><path d="M-4.5 6.5v-9h9v9" fill="none" stroke="#2b3f5e" stroke-width="2"/><path d="M-6.5 -6.5l3 2M-6 -3.5l0-3l3 0" stroke="#2b3f5e" stroke-width="1.1" fill="none"/></g>
<g transform="translate(561.8 27.8) scale(0.8)"><path d="M-2.5 5l2-10l2 10zM-0.5 -6v13" fill="none" stroke="#2b3f5e" stroke-width="1.2"/><path d="M2.5 3.5h4l-1.5-1.2" fill="none" stroke="#4f6e9c" stroke-width="0.9"/></g>
<g transform="translate(577.0 27.8) scale(0.8)"><path d="M-6 -3.5h12v3l-5 4.5h-2l-5-4.5z" fill="#b9b9b9"/></g>
<g transform="translate(592.0 27.8) scale(0.8)"><path d="M-5.5 5.5l1.2-9l4.3 3.4l4.3-3.4l1.2 9" fill="none" stroke="#2b3f5e" stroke-width="1.7"/><path d="M-6.5 -3.5l2-2l2 2" fill="none" stroke="#2b3f5e" stroke-width="1"/></g>
<g transform="translate(607.0 27.8) scale(0.9)"><rect x="-6.8" y="-6.8" width="13.6" height="13.6" fill="#7f9cc4" stroke="#3a3a3a" stroke-width="1.2"/><circle cx="0" cy="0" r="4" fill="#9db5d6"/></g>
<g transform="translate(622.0 27.8) scale(0.8)"><path d="M-5.5 -4l11-1.5v9l-11-1.5z" fill="none" stroke="#bdbdbd" stroke-width="1.3"/><path d="M-3 -3.5v7M1 -4v8" stroke="#c9c9c9" stroke-width="1"/></g>
<g transform="translate(637.0 27.8) scale(0.8)"><path d="M-4.5 4.5l9-9M-4.5 -1v-3.5h3.5M4.5 1v3.5h-3.5" fill="none" stroke="#bdbdbd" stroke-width="1.3"/></g>
<line x1="38.0" y1="21.8" x2="38.0" y2="33.8" stroke="#c4c4c4" stroke-width="1"/>
<line x1="57.7" y1="21.8" x2="57.7" y2="33.8" stroke="#c4c4c4" stroke-width="1"/>
<line x1="90.7" y1="21.8" x2="90.7" y2="33.8" stroke="#c4c4c4" stroke-width="1"/>
<line x1="109.5" y1="21.8" x2="109.5" y2="33.8" stroke="#c4c4c4" stroke-width="1"/>
<line x1="128.0" y1="21.8" x2="128.0" y2="33.8" stroke="#c4c4c4" stroke-width="1"/>
<line x1="147.0" y1="21.8" x2="147.0" y2="33.8" stroke="#c4c4c4" stroke-width="1"/>
<line x1="226.0" y1="21.8" x2="226.0" y2="33.8" stroke="#c4c4c4" stroke-width="1"/>
<line x1="259.7" y1="21.8" x2="259.7" y2="33.8" stroke="#c4c4c4" stroke-width="1"/>
<line x1="339.0" y1="21.8" x2="339.0" y2="33.8" stroke="#c4c4c4" stroke-width="1"/>
<line x1="358.0" y1="21.8" x2="358.0" y2="33.8" stroke="#c4c4c4" stroke-width="1"/>
<line x1="391.7" y1="21.8" x2="391.7" y2="33.8" stroke="#c4c4c4" stroke-width="1"/>
<line x1="470.7" y1="21.8" x2="470.7" y2="33.8" stroke="#c4c4c4" stroke-width="1"/>
<line x1="534.5" y1="21.8" x2="534.5" y2="33.8" stroke="#c4c4c4" stroke-width="1"/>
<line x1="553.0" y1="21.8" x2="553.0" y2="33.8" stroke="#c4c4c4" stroke-width="1"/>
<g transform="translate(751.2 27.8) scale(0.8)"><path d="M-3.5 -5.5h7M-3.5 5.5h7M0 -5.5v11" stroke="#222" stroke-width="1.6" fill="none"/></g>
<g transform="translate(773.7 27.8) scale(0.8)"><rect x="-4.5" y="-5.5" width="9" height="11" rx="1" fill="#c9d8ec" stroke="#2b3f5e" stroke-width="1.4"/></g>
<g transform="translate(796.2 27.8) scale(0.8)"><path d="M-5.5 -5h11l-3 2.8h-5z" fill="#333"/><path d="M0 -2.5v7M-3.5 5.2h7" stroke="#222" stroke-width="1.8"/></g>
<g transform="translate(818.7 27.8) scale(0.8)"><rect x="-5" y="-6" width="10" height="12" fill="#8fa9cd" stroke="#333" stroke-width="1"/><path d="M-3 -4h6M-3 4h6M0 -4v8" stroke="#111" stroke-width="1.6"/></g>
<g transform="translate(841.0 27.8) scale(0.8)"><rect x="-5.5" y="-2" width="11" height="4" fill="#9ab0cf" stroke="#333" stroke-width="0.9"/><path d="M-3.5 -2l2.5 4M-1 -2l2.5 4M1.5 -2l2.5 4M-3.5 2l2.5-4M-1 2l2.5-4M1.5 2l2.5-4" stroke="#333" stroke-width="0.6"/></g>
<g transform="translate(863.7 27.8) scale(0.8)"><rect x="-5.5" y="-6" width="11" height="12" fill="#8fa9cd"/><path d="M4 -3.5h-6.5v7h6.5" fill="none" stroke="#f4f6fa" stroke-width="2.2"/></g>
<g transform="translate(886.0 27.8) scale(0.8)"><rect x="-5.5" y="-1.5" width="11" height="3.4" fill="#7088ac" stroke="#444" stroke-width="0.7"/></g>
<path d="M760.3 26.8l4.4 0l-2.2 2.6z" fill="#111"/>
<path d="M782.8 26.8l4.4 0l-2.2 2.6z" fill="#111"/>
<path d="M805.3 26.8l4.4 0l-2.2 2.6z" fill="#111"/>
<path d="M827.8 26.8l4.4 0l-2.2 2.6z" fill="#111"/>
<path d="M850.3 26.8l4.4 0l-2.2 2.6z" fill="#111"/>
<path d="M872.8 26.8l4.4 0l-2.2 2.6z" fill="#111"/>
<path d="M895.8 26.8l4.4 0l-2.2 2.6z" fill="#111"/>
<path d="M3.0 21.5v12M5.0 22.0v12" stroke="#bcbcbc" stroke-width="1" stroke-dasharray="1 1"/>
<path d="M3.0 39.5v12M5.0 40.0v12" stroke="#bcbcbc" stroke-width="1" stroke-dasharray="1 1"/>
<path d="M741.0 21.5v12M743.0 22.0v12" stroke="#bcbcbc" stroke-width="1" stroke-dasharray="1 1"/>
<g transform="translate(12.7 45.3) scale(0.88)"><path d="M-5 4.5l10-8.5M-1 -0.5l6 4" stroke="#a6a6a6" stroke-width="1.3"/><circle cx="-4.5" cy="1.2" r="1.6" fill="none" stroke="#a6a6a6" stroke-width="1"/><circle cx="-3.5" cy="4.6" r="1.6" fill="none" stroke="#a6a6a6" stroke-width="1"/></g>
<g transform="translate(28.5 45.3) scale(0.85)"><path d="M-5 -4h6.5l2 2v8h-8.5z" fill="#c4c4c4"/><path d="M-3 -6h6.5l2 2v8h-1" fill="none" stroke="#bdbdbd" stroke-width="1"/></g>
<g transform="translate(44.0 45.3) scale(0.88)"><rect x="-5.5" y="-5" width="8" height="11" fill="none" stroke="#a6a6a6" stroke-width="1.2"/><rect x="-3" y="-6.5" width="3.5" height="2.4" fill="#a6a6a6"/><path d="M-1 -1h6.5v7.5h-6.5z" fill="#d2d2d2" stroke="#a6a6a6" stroke-width="0.9"/></g>
<g transform="translate(58.5 45.3) scale(0.88)"><path d="M-4.5 -4.5l9 9M4.5 -4.5l-9 9" stroke="#8d8d8d" stroke-width="1.7"/></g>
<g transform="translate(78.0 45.3) scale(0.88)"><path d="M-6.5 6.5l3.2-11.5l2.6 8l2.6-10l3.8 12.5z" fill="#2f4f86"/><path d="M-7 7h14" stroke="#2b3f5e" stroke-width="1.2"/></g>
<g transform="translate(96.0 45.3) scale(0.88)"><path d="M-4.5 -6v12M0 -6v12M4.5 -6v12" stroke="#a6a6a6" stroke-width="1" stroke-dasharray="2 1.4"/><circle cx="-4.5" cy="5.5" r="1" fill="#a6a6a6"/><circle cx="4.5" cy="-5.5" r="1" fill="#a6a6a6"/></g>
<g transform="translate(114.7 45.3) scale(0.88)"><path d="M-5 5l10-10M-4 -4l8 8" stroke="#a6a6a6" stroke-width="1.1"/><circle cx="-5" cy="5" r="1.1" fill="#a6a6a6"/><path d="M5 -5l-3 0.5M5 -5l-0.5 3" stroke="#a6a6a6" stroke-width="1"/></g>
<g transform="translate(129.7 45.3) scale(0.88)"><path d="M-3 -5.5l8 5.5l-4.5 5.5l-8-5.5z" fill="#d6d6d6" stroke="#a6a6a6" stroke-width="1"/><path d="M-5.5 5.5l11-11" stroke="#a6a6a6" stroke-width="1"/></g>
<g transform="translate(148.5 45.3) scale(0.88)"><circle cx="-4.5" cy="2" r="1.1" fill="#a6a6a6"/><circle cx="-0.5" cy="-3.5" r="1.1" fill="#a6a6a6"/><circle cx="1.5" cy="1.2" r="1.1" fill="#a6a6a6"/><circle cx="5" cy="4.8" r="1.1" fill="#a6a6a6"/></g>
<g transform="translate(163.5 45.3) scale(0.88)"><path d="M-5 -5.5v11h10v-3.5h-7.5M-5 -3h9" fill="none" stroke="#a6a6a6" stroke-width="1.5"/></g>
<g transform="translate(179.0 45.3) scale(0.88)"><path d="M-6 0h12M0 -6v12M-6 0l2-1.6M-6 0l2 1.6M6 0l-2-1.6M6 0l-2 1.6M0 -6l-1.6 2M0 -6l1.6 2M0 6l-1.6-2M0 6l1.6-2" stroke="#a6a6a6" stroke-width="1.1" fill="none"/></g>
<g transform="translate(198.0 45.3) scale(0.88)"><path d="M-6 3l11-9M-4 6l11-9M-1.5 3.5l2-3.5" stroke="#a6a6a6" stroke-width="1.1"/></g>
<g transform="translate(212.5 45.3) scale(0.88)"><path d="M-6 3l11-9M-4 6l11-9M-1.5 3.5l2-3.5" stroke="#a6a6a6" stroke-width="1.1"/></g>
<g transform="translate(227.0 45.3) scale(0.88)"><path d="M-6 4.5l12-9" stroke="#a6a6a6" stroke-width="1.1"/><path d="M-4 0l2 2M-2 0l-2 2M3 -1.5l2 2M5 -1.5l-2 2" stroke="#a6a6a6" stroke-width="0.9"/></g>
<g transform="translate(246.0 45.3) scale(0.88)"><path d="M0 -6l7 6l-7 6l-7-6z" fill="#dcdcdc" stroke="#a6a6a6" stroke-width="1.1"/><path d="M-3.5 -3l7 6M3.5 -3l-7 6" stroke="#a6a6a6" stroke-width="0.9"/></g>
<g transform="translate(262.0 45.3) scale(0.88)"><rect x="-5.5" y="-6" width="4.5" height="3.5" fill="#d6d6d6" stroke="#a6a6a6" stroke-width="0.9"/><rect x="1" y="-6" width="4.5" height="3.5" fill="#d6d6d6" stroke="#a6a6a6" stroke-width="0.9"/><rect x="-5.5" y="2" width="11" height="4" fill="#d6d6d6" stroke="#a6a6a6" stroke-width="0.9"/><path d="M0 -2.5v4.5" stroke="#a6a6a6" stroke-width="1"/></g>
<g transform="translate(276.0 45.3) scale(0.88)"><rect x="-5" y="-2" width="8" height="7.5" fill="#d6d6d6" stroke="#a6a6a6" stroke-width="1"/><path d="M-5 -4.5h8M5 -4l-2 2" stroke="#a6a6a6" stroke-width="1"/></g>
<g transform="translate(291.0 45.3) scale(0.88)"><path d="M-3 -6l9 6l-5 6l-9-6z" fill="#cfcfcf" stroke="#a6a6a6" stroke-width="1"/><circle cx="-4.5" cy="4.5" r="1.8" fill="none" stroke="#a6a6a6" stroke-width="1"/></g>
<g transform="translate(307.0 45.3) scale(0.88)"><path d="M-3 -6l9 6l-5 6l-9-6z" fill="#cfcfcf" stroke="#a6a6a6" stroke-width="1"/><circle cx="-4.5" cy="4.5" r="1.8" fill="none" stroke="#a6a6a6" stroke-width="1"/></g>
<g transform="translate(322.0 45.3) scale(0.88)"><path d="M-5.5 5.5v-7l4-4h7v11z" fill="#d9d9d9" stroke="#a6a6a6" stroke-width="1.1"/></g>
<g transform="translate(337.0 45.3) scale(0.88)"><path d="M-1 -6.5v13M-6 0.5h12M-1 -6.5c3 3 3 8 0 11" fill="none" stroke="#a6a6a6" stroke-width="1.1"/></g>
<g transform="translate(352.0 45.3) scale(0.88)"><rect x="-6" y="-6" width="12" height="12" fill="#dedede" stroke="#a6a6a6" stroke-width="1.1"/><rect x="-3.2" y="-3.2" width="6.4" height="6.4" fill="none" stroke="#a6a6a6" stroke-width="0.9"/><circle cx="0" cy="0" r="1" fill="#a6a6a6"/></g>
<line x1="68.0" y1="39.3" x2="68.0" y2="51.3" stroke="#c4c4c4" stroke-width="1"/>
<line x1="87.0" y1="39.3" x2="87.0" y2="51.3" stroke="#c4c4c4" stroke-width="1"/>
<line x1="105.7" y1="39.3" x2="105.7" y2="51.3" stroke="#c4c4c4" stroke-width="1"/>
<line x1="140.0" y1="39.3" x2="140.0" y2="51.3" stroke="#c4c4c4" stroke-width="1"/>
<line x1="189.0" y1="39.3" x2="189.0" y2="51.3" stroke="#c4c4c4" stroke-width="1"/>
<line x1="238.0" y1="39.3" x2="238.0" y2="51.3" stroke="#c4c4c4" stroke-width="1"/>
<g transform="translate(1573.0 10.5) scale(0.88)"><path d="M0 3.5l-3.6-4h2.1v-4.5h3v4.5h2.1z" fill="#2b3f5e"/><path d="M-5 2.5v3h10v-3" fill="none" stroke="#4f6e9c" stroke-width="1.2"/></g>
<rect x="1.5" y="62.5" width="12.5" height="15.5" fill="#b9d6f3" stroke="#7fb0e4" stroke-width="1"/>
<g transform="translate(7.8 70.3) scale(1)"><path d="M-3 -6l0 10.5l2.6-2.4l2 4.4l1.8-0.8l-2-4.3l3.4-0.2z" fill="#1f2f4c"/></g>
<g transform="translate(7.8 86.7) scale(1)"><path d="M-5 -4h8M-1 -6.5v3" stroke="#a8a8a8" stroke-width="1"/><circle cx="-1" cy="-4" r="1.4" fill="none" stroke="#a8a8a8" stroke-width="0.8"/><path d="M-0.5 -1l0 8l1.8-1.6l1.4 3l1.2-0.6l-1.4-3l2.4-0.2z" fill="#a8a8a8"/></g>
<g transform="translate(7.8 107.7) scale(1)"><path d="M-5 -6l10 12" stroke="#a8a8a8" stroke-width="1.2"/></g>
<g transform="translate(7.8 125.0) scale(1)"><rect x="-5.5" y="-6" width="11" height="12" fill="none" stroke="#a8a8a8" stroke-width="1" stroke-dasharray="2.4 1.4"/><path d="M-5.5 -6l11 12" stroke="#a8a8a8" stroke-width="1.1"/></g>
<g transform="translate(7.8 141.5) scale(1)"><rect x="-5.5" y="-6" width="11" height="12" fill="none" stroke="#a8a8a8" stroke-width="1" stroke-dasharray="2.4 1.4"/><path d="M0 -3.5v7M-2 -3.5h4M-2 3.5h4" stroke="#a8a8a8" stroke-width="1.1"/></g>
<g transform="translate(7.8 158.8) scale(1)"><rect x="-5.5" y="-6" width="11" height="12" fill="none" stroke="#a8a8a8" stroke-width="1" stroke-dasharray="2.4 1.4"/><circle cx="0" cy="0" r="1.3" fill="#a8a8a8"/><path d="M-5.5 -6v12M5.5 -6v12" stroke="#a8a8a8" stroke-width="1.3"/></g>
<g transform="translate(7.8 176.3) scale(1)"><rect x="-5.5" y="-6" width="11" height="12" fill="none" stroke="#a8a8a8" stroke-width="0.9" stroke-dasharray="2.4 1.4"/><path d="M-5.5 -6l11 12M5.5 -6l-11 12" stroke="#a8a8a8" stroke-width="1.1"/></g>
<g transform="translate(7.8 197.2) scale(1)"><path d="M-5 -6h6l4 4.5v7.5h-10z" fill="#d6d6d6" stroke="#a8a8a8" stroke-width="1.1"/></g>
<g transform="translate(7.8 214.0) scale(1)"><rect x="-5.5" y="-5.5" width="11" height="11" fill="#d6d6d6" stroke="#a8a8a8" stroke-width="1.1"/></g>
<g transform="translate(7.8 231.0) scale(1)"><rect x="-5.5" y="-6" width="11" height="12" fill="#dadada" stroke="#a8a8a8" stroke-width="1" stroke-dasharray="2.4 1.4"/><circle cx="0" cy="0" r="1.2" fill="#a8a8a8"/></g>
<g transform="translate(7.8 248.0) scale(1)"><rect x="-5.5" y="-6" width="11" height="12" fill="#d8d8d8" stroke="#a8a8a8" stroke-width="1"/><circle cx="0" cy="0.5" r="3" fill="none" stroke="#a8a8a8" stroke-width="0.9"/></g>
<g transform="translate(7.8 268.5) scale(1)"><path d="M-4.5 -5.5v10h9v-5.5" fill="none" stroke="#a8a8a8" stroke-width="1.8"/></g>
<g transform="translate(7.8 286.0) scale(1)"><rect x="-5.5" y="-6" width="11" height="12" fill="none" stroke="#a8a8a8" stroke-width="1" stroke-dasharray="2.4 1.4"/><path d="M-2.5 -3v6.5h5.5" fill="none" stroke="#a8a8a8" stroke-width="1.4"/></g>
<g transform="translate(7.8 302.8) scale(1)"><rect x="-4.5" y="-5.5" width="9" height="11" fill="#d8d8d8" stroke="#a8a8a8" stroke-width="1"/><rect x="-1.5" y="-2.5" width="3" height="3" fill="none" stroke="#a8a8a8" stroke-width="0.8"/></g>
<g transform="translate(7.8 323.0) scale(1)"><path d="M-5 -5.5l10 11M-2 1l3-3" stroke="#a8a8a8" stroke-width="1.1"/></g>
<g transform="translate(7.8 346.5) scale(1)"><path d="M-5 -6v12M-1.7 -6v12M1.7 -6v12M5 -6v12M-5 -6h10M-5 -2h10M-5 2h10M-5 6h10" stroke="#a8a8a8" stroke-width="0.9"/></g>
<g transform="translate(7.8 364.8) scale(1)"><path d="M-5.5 6l3.5-12h4l3.5 12z" fill="#c6c6c6" stroke="#a8a8a8" stroke-width="0.8"/></g>
<g transform="translate(7.8 381.5) scale(1)"><path d="M-6 1c2-3 4-3 6 0s4 3 6 0" fill="none" stroke="#a8a8a8" stroke-width="1.1"/></g>
<g transform="translate(7.8 401.0) scale(1)"><path d="M-4 3.5l8-9" stroke="#a8a8a8" stroke-width="1.8"/><path d="M-6 6h12" stroke="#a8a8a8" stroke-width="1" stroke-dasharray="1 1"/></g>
<rect x="1" y="411.5" width="13" height="39" fill="#d3d3d3"/>
<text x="2" y="468.1" font-size="7" fill="#4f6e9c">all</text>
<g transform="translate(11.2 462.0) scale(1)"><path d="M-1.8 -3.8l0 6.5l1.5-1.3l1.2 2.4l1-0.5l-1.2-2.4l2-0.2z" fill="#2b3f5e"/></g>
<text x="2" y="484.1" font-size="7" fill="#a8a8a8">ps</text>
<g transform="translate(11.2 478.0) scale(1)"><path d="M-1.8 -3.8l0 6.5l1.5-1.3l1.2 2.4l1-0.5l-1.2-2.4l2-0.2z" fill="#a8a8a8"/></g>
<text x="2" y="501.1" font-size="7" fill="#a8a8a8">clr</text>
<g transform="translate(11.2 495.0) scale(1)"><path d="M-1.8 -3.8l0 6.5l1.5-1.3l1.2 2.4l1-0.5l-1.2-2.4l2-0.2z" fill="#a8a8a8"/></g>
<g transform="translate(7.8 514.0) scale(1)"><path d="M-5.5 -5.5l9 11M-5.5 -2l6 7.5M-2 -5.5l7 8.5" stroke="#2b3f5e" stroke-width="1"/><path d="M1.5 -6l0 6.5l1.5-1.3l1.2 2.4l1-0.5l-1.2-2.4l2-0.2z" fill="#2b3f5e"/></g>
<rect x="1.5" y="530.5" width="12.5" height="15.5" fill="#b9d6f3" stroke="#7fb0e4" stroke-width="1"/>
<g transform="translate(7.8 538.5) scale(1)"><path d="M-5.5 0.5h8M-0.5 -6v12" stroke="#2b3f5e" stroke-width="1"/><path d="M5.5 -2.8l-3.5 3.3l3.5 3.3z" fill="#2b3f5e"/><circle cx="2.2" cy="-4" r="0.8" fill="#2b3f5e"/></g>
<g transform="translate(7.8 557.0) scale(1)"><path d="M-5 4.5l8.5-8" stroke="#2b3f5e" stroke-width="1"/><circle cx="-5" cy="4.5" r="1.2" fill="none" stroke="#2b3f5e" stroke-width="0.8"/><circle cx="-0.8" cy="0.6" r="1.2" fill="none" stroke="#2b3f5e" stroke-width="0.8"/><circle cx="3.8" cy="-3.8" r="1.2" fill="none" stroke="#2b3f5e" stroke-width="0.8"/><path d="M6 0.5l-3 2.5l3.2 1z" fill="#2b3f5e"/></g>
<g transform="translate(7.8 573.0) scale(1)"><path d="M-5 -5.5l9.5 11" stroke="#2b3f5e" stroke-width="1.1"/><path d="M5.5 -4l-4.5 3l4.5 3z" fill="#2b3f5e"/></g>
<g transform="translate(7.8 589.5) scale(1)"><path d="M-5 -5.5l10 11.5M5 -5.5l-10 11.5" stroke="#2b3f5e" stroke-width="1.1"/><path d="M6 -2.2l-3.4 2.4l3.4 2.4z" fill="#2b3f5e"/></g>
<g transform="translate(7.8 607.5) scale(1)"><path d="M-5.5 0h11M-1 -6v12" stroke="#2b3f5e" stroke-width="1"/><path d="M5.5 -2.6l-3.2 2.6l3.2 2.6z" fill="#2b3f5e"/></g>
<rect x="1.5" y="617.5" width="12.5" height="13" fill="#bfbfbf"/>
<g transform="translate(9.3 624.0) scale(1)"><path d="M-3 0h6" stroke="#e6e6e6" stroke-width="1"/><path d="M4.5 -2l-2.6 2l2.6 2z" fill="#555"/></g>
<line x1="2" y1="97.0" x2="13.5" y2="97.0" stroke="#c2c2c2" stroke-width="1"/>
<line x1="2" y1="186.5" x2="13.5" y2="186.5" stroke="#c2c2c2" stroke-width="1"/>
<line x1="2" y1="258.0" x2="13.5" y2="258.0" stroke="#c2c2c2" stroke-width="1"/>
<line x1="2" y1="312.5" x2="13.5" y2="312.5" stroke="#c2c2c2" stroke-width="1"/>
<path d="M2.5 57.5h11M3 59.1h11" stroke="#bdbdbd" stroke-width="1" stroke-dasharray="1 1"/>
<path d="M2.5 455.5h11M3 457.1h11" stroke="#bdbdbd" stroke-width="1" stroke-dasharray="1 1"/>
<path d="M2.5 523.5h11M3 525.1h11" stroke="#bdbdbd" stroke-width="1" stroke-dasharray="1 1"/>
<path d="M310.5 62l5 0l-2.5 3z" fill="#111"/>
<path d="M1581.8 62l5 0l-2.5 3z" fill="#111"/>
<path d="M320.8 60.3l5 5.4M325.8 60.3l-5 5.4" stroke="#111" stroke-width="1.1"/>
<path d="M1592.0 60.3l5 5.4M1597.0 60.3l-5 5.4" stroke="#111" stroke-width="1.1"/>
<path d="M30 90.5h3" stroke="#b5b5b5" stroke-width="0.8" stroke-dasharray="1 1"/>
<rect x="24.5" y="88.0" width="5" height="5" fill="#fff" stroke="#9aa0ac" stroke-width="0.8"/><path d="M25.5 90.5h3" stroke="#3a4a7a" stroke-width="0.8"/>
<path d="M38.7 93.5v5M41.5 100.5h3" stroke="#b5b5b5" stroke-width="0.8" stroke-dasharray="1 1"/>
<rect x="36.2" y="98.0" width="5" height="5" fill="#fff" stroke="#9aa0ac" stroke-width="0.8"/><path d="M37.2 100.5h3" stroke="#3a4a7a" stroke-width="0.8"/><path d="M38.7 99.0v3" stroke="#3a4a7a" stroke-width="0.8"/>
<path d="M38.7 103.5v5M41.5 110.5h3" stroke="#b5b5b5" stroke-width="0.8" stroke-dasharray="1 1"/>
<rect x="36.2" y="108.0" width="5" height="5" fill="#fff" stroke="#9aa0ac" stroke-width="0.8"/><path d="M37.2 110.5h3" stroke="#3a4a7a" stroke-width="0.8"/><path d="M38.7 109.0v3" stroke="#3a4a7a" stroke-width="0.8"/>
<path d="M38.7 113.6v5M41.5 120.6h3" stroke="#b5b5b5" stroke-width="0.8" stroke-dasharray="1 1"/>
<rect x="36.2" y="118.1" width="5" height="5" fill="#fff" stroke="#9aa0ac" stroke-width="0.8"/><path d="M37.2 120.6h3" stroke="#3a4a7a" stroke-width="0.8"/><path d="M38.7 119.1v3" stroke="#3a4a7a" stroke-width="0.8"/>
<path d="M38.7 123.6v5M41.5 130.6h3" stroke="#b5b5b5" stroke-width="0.8" stroke-dasharray="1 1"/>
<rect x="36.2" y="128.1" width="5" height="5" fill="#fff" stroke="#9aa0ac" stroke-width="0.8"/><path d="M37.2 130.6h3" stroke="#3a4a7a" stroke-width="0.8"/><path d="M38.7 129.1v3" stroke="#3a4a7a" stroke-width="0.8"/>
<path d="M38.7 133.6v5M41.5 140.6h3" stroke="#b5b5b5" stroke-width="0.8" stroke-dasharray="1 1"/>
<rect x="36.2" y="138.1" width="5" height="5" fill="#fff" stroke="#9aa0ac" stroke-width="0.8"/><path d="M37.2 140.6h3" stroke="#3a4a7a" stroke-width="0.8"/><path d="M38.7 139.1v3" stroke="#3a4a7a" stroke-width="0.8"/>
<path d="M38.7 143.7v5M41.5 150.7h3" stroke="#b5b5b5" stroke-width="0.8" stroke-dasharray="1 1"/>
<rect x="36.2" y="148.2" width="5" height="5" fill="#fff" stroke="#9aa0ac" stroke-width="0.8"/><path d="M37.2 150.7h3" stroke="#3a4a7a" stroke-width="0.8"/><path d="M38.7 149.2v3" stroke="#3a4a7a" stroke-width="0.8"/>
<path d="M38.7 153.7v5M41.5 160.7h3" stroke="#b5b5b5" stroke-width="0.8" stroke-dasharray="1 1"/>
<rect x="36.2" y="158.2" width="5" height="5" fill="#fff" stroke="#9aa0ac" stroke-width="0.8"/><path d="M37.2 160.7h3" stroke="#3a4a7a" stroke-width="0.8"/><path d="M38.7 159.2v3" stroke="#3a4a7a" stroke-width="0.8"/>
<path d="M38.7 163.7v5M41.5 170.7h3" stroke="#b5b5b5" stroke-width="0.8" stroke-dasharray="1 1"/>
<rect x="36.2" y="168.2" width="5" height="5" fill="#fff" stroke="#9aa0ac" stroke-width="0.8"/><path d="M37.2 170.7h3" stroke="#3a4a7a" stroke-width="0.8"/><path d="M38.7 169.2v3" stroke="#3a4a7a" stroke-width="0.8"/>
<path d="M1504.7 850.5l2.3 2.3l2.3-2.3" fill="none" stroke="#444" stroke-width="0.8"/>
<path d="M1560.2 850.5l2.3 2.3l2.3-2.3" fill="none" stroke="#444" stroke-width="0.8"/>
</svg>
<span class="t" id="t0" style="left:5.0px;top:6.0px;font-size:8.4px;line-height:10.1px;color:#2b2326;transform:scaleX(0.8370);">File</span>
<span class="t" id="t1" style="left:27.5px;top:6.0px;font-size:8.4px;line-height:10.1px;color:#2b2326;transform:scaleX(0.9074);">Edit</span>
<span class="t" id="t2" style="left:52.5px;top:6.0px;font-size:8.4px;line-height:10.1px;color:#2b2326;transform:scaleX(0.8604);">View</span>
<span class="t" id="t3" style="left:79.7px;top:6.0px;font-size:8.4px;line-height:10.1px;color:#2b2326;transform:scaleX(0.9001);">Define</span>
<span class="t" id="t4" style="left:113.0px;top:6.0px;font-size:8.4px;line-height:10.1px;color:#2b2326;transform:scaleX(0.8544);">Draw</span>
<span class="t" id="t5" style="left:141.5px;top:6.0px;font-size:8.4px;line-height:10.1px;color:#2b2326;transform:scaleX(0.8591);">Select</span>
<span class="t" id="t6" style="left:173.4px;top:6.0px;font-size:8.4px;line-height:10.1px;color:#2b2326;transform:scaleX(0.8711);">Assign</span>
<span class="t" id="t7" style="left:207.0px;top:6.0px;font-size:8.4px;line-height:10.1px;color:#2b2326;transform:scaleX(0.8659);">Analyze</span>
<span class="t" id="t8" style="left:244.7px;top:6.0px;font-size:8.4px;line-height:10.1px;color:#2b2326;transform:scaleX(0.8774);">Display</span>
<span class="t" id="t9" style="left:280.6px;top:6.0px;font-size:8.4px;line-height:10.1px;color:#2b2326;transform:scaleX(0.8590);">Design</span>
<span class="t" id="t10" style="left:315.0px;top:6.0px;font-size:8.4px;line-height:10.1px;color:#2b2326;transform:scaleX(0.9112);">Detailing</span>
<span class="t" id="t11" style="left:356.0px;top:6.0px;font-size:8.4px;line-height:10.1px;color:#2b2326;transform:scaleX(0.9281);">Options</span>
<span class="t" id="t12" style="left:394.7px;top:6.0px;font-size:8.4px;line-height:10.1px;color:#2b2326;transform:scaleX(0.8843);">Tools</span>
<span class="t" id="t13" style="left:424.0px;top:6.0px;font-size:8.4px;line-height:10.1px;color:#2b2326;transform:scaleX(0.9284);">Help</span>
<span class="t" id="t14" style="left:41.0px;top:58.8px;font-size:9.0px;line-height:10.8px;color:#1e1e1e;transform:scaleX(0.8260);">Model Explorer</span>
<span class="t" id="t15" style="left:20.4px;top:72.4px;font-size:8.2px;line-height:9.8px;color:#1e1e1e;transform:scaleX(0.8112);">Model</span>
<span class="t" id="t16" style="left:46.6px;top:73.3px;font-size:8.2px;line-height:9.8px;color:#1e1e1e;transform:scaleX(0.7818);">Display</span>
<span class="t" id="t17" style="left:76.0px;top:73.3px;font-size:8.2px;line-height:9.8px;color:#1e1e1e;transform:scaleX(0.8153);">Tables</span>
<span class="t" id="t18" style="left:103.0px;top:73.3px;font-size:8.2px;line-height:9.8px;color:#1e1e1e;transform:scaleX(0.8022);">Reports</span>
<span class="t" id="t19" style="left:34.3px;top:86.2px;font-size:8.2px;line-height:9.8px;color:#1e1e1e;transform:scaleX(0.7798);">Model</span>
<span class="t" id="t20" style="left:46.0px;top:96.3px;font-size:8.2px;line-height:9.8px;color:#1e1e1e;transform:scaleX(0.8005);">Project</span>
<span class="t" id="t21" style="left:46.0px;top:106.3px;font-size:8.2px;line-height:9.8px;color:#1e1e1e;transform:scaleX(0.8089);">Structure Layout</span>
<span class="t" id="t22" style="left:46.0px;top:116.3px;font-size:8.2px;line-height:9.8px;color:#1e1e1e;transform:scaleX(0.7849);">Properties</span>
<span class="t" id="t23" style="left:46.0px;top:126.4px;font-size:8.2px;line-height:9.8px;color:#1e1e1e;transform:scaleX(0.8083);">Structural Objects</span>
<span class="t" id="t24" style="left:46.0px;top:136.4px;font-size:8.2px;line-height:9.8px;color:#1e1e1e;transform:scaleX(0.7818);">Groups</span>
<span class="t" id="t25" style="left:46.0px;top:146.4px;font-size:8.2px;line-height:9.8px;color:#1e1e1e;transform:scaleX(0.8067);">Loads</span>
<span class="t" id="t26" style="left:46.0px;top:156.5px;font-size:8.2px;line-height:9.8px;color:#1e1e1e;transform:scaleX(0.8008);">Named Output Items</span>
<span class="t" id="t27" style="left:46.0px;top:166.5px;font-size:8.2px;line-height:9.8px;color:#1e1e1e;transform:scaleX(0.7979);">Named Plots</span>
<span class="t" id="t28" style="left:360.3px;top:58.6px;font-size:9.0px;line-height:10.8px;color:#1f2a44;transform:scaleX(0.8058);">3-D View</span>
<span class="t" id="t29" style="left:8.6px;top:846.7px;font-size:8.2px;line-height:9.8px;color:#1e1e1e;transform:scaleX(0.7981);">3-D View</span>
<span class="t" id="t30" style="left:1461.0px;top:846.9px;font-size:8.2px;line-height:9.8px;color:#1e1e1e;transform:scaleX(0.8000);">One Story</span>
<span class="t" id="t31" style="left:1516.5px;top:846.9px;font-size:8.2px;line-height:9.8px;color:#1e1e1e;transform:scaleX(0.7815);">Global</span>
<span class="t" id="t32" style="left:1576.0px;top:846.9px;font-size:8.2px;line-height:9.8px;color:#1e1e1e;transform:scaleX(0.7848);">Units...</span>
</body></html>
